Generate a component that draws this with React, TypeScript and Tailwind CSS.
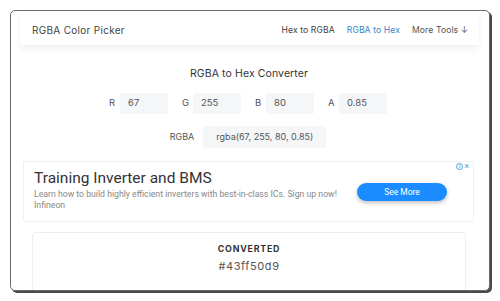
import React from "react";

export default function App() {
  const font = { fontFamily: "Inter, 'Noto Sans', sans-serif" };
  const Field = ({ label, value }: { label: string; value: string }) => (
    <div className="flex items-center">
      <span className="w-[11px] text-[9.5px] text-[#555]">{label}</span>
      <div className="w-[48px] h-[21px] bg-[#f4f6f8] rounded-[2px] flex items-center pl-[8px] text-[9.5px] text-[#555]">
        {value}
      </div>
    </div>
  );
  return (
    <div className="w-[500px] h-[301px] bg-white pt-[10px] pl-[10px]" style={font}>
      <div className="w-[480px] h-[281px] border border-[#6a6a6a] rounded-[5px] shadow-[2px_2px_0_#4a4a4a] overflow-hidden bg-white flex flex-col">
        <div className="ml-[9px] mr-[10px] h-[34px] shrink-0 flex items-center justify-between pl-[12px] pr-[11px] pt-[4px] bg-white shadow-[0_4px_6px_rgba(0,0,0,0.06)]">
          <span className="text-[10px] text-[#444] tracking-[0.3px]">RGBA Color Picker</span>
          <div className="flex items-center gap-[12px] text-[8.6px] tracking-[0.1px]">
            <span className="text-[#444]">Hex to RGBA</span>
            <span className="text-[#3a86c8]">RGBA to Hex</span>
            <span className="text-[#555]">More Tools ↓</span>
          </div>
        </div>
        <div className="mt-[21px] text-center text-[10.5px] leading-[16px] text-[#333] tracking-[0.1px] pr-[2px]">
          RGBA to Hex Converter
        </div>
        <div className="mt-[11px] flex justify-center gap-[14px] pr-[4px]">
          <Field label="R" value="67" />
          <Field label="G" value="255" />
          <Field label="B" value="80" />
          <Field label="A" value="0.85" />
        </div>
        <div className="mt-[12px] flex justify-center items-center gap-[9px] pr-[4px]">
          <span className="text-[9px] text-[#555]">RGBA</span>
          <div className="w-[123px] h-[22px] bg-[#f4f6f8] rounded-[2px] flex items-center justify-center text-[9px] text-[#555]">
            rgba(67, 255, 80, 0.85)
          </div>
        </div>
        <div className="mt-[13px] ml-[12px] w-[451px] h-[61px] shrink-0 border border-[#f0f0f0] rounded-[2px] relative flex items-center" style={{ fontFamily: "Roboto, Arial, sans-serif" }}>
          <div className="absolute top-[0px] right-[4px] flex items-center gap-[1px] text-[#4aa3df] text-[8px] leading-none">
            <span className="inline-flex items-center justify-center w-[7px] h-[7px] rounded-full border border-[#4aa3df] text-[5px] font-bold">i</span>
            <span className="text-[9px]">×</span>
          </div>
          <div className="pl-[10px] flex-1 -mt-[3px]">
            <div className="text-[15.5px] leading-[19px] text-[#333]">Training Inverter and BMS</div>
            <div className="mt-[1px] text-[8.7px] leading-[11px] text-[#888]">
              Learn how to build highly efficient inverters with best-in-class ICs. Sign up now!
            </div>
            <div className="text-[8.7px] leading-[11px] text-[#888]">Infineon</div>
          </div>
          <div className="mr-[26px] mt-[1px] w-[90px] h-[18px] rounded-full bg-[#1a8cff] text-white text-[8.5px] flex items-center justify-center shadow-[0_2px_4px_rgba(0,0,0,0.25)]">
            See More
          </div>
        </div>
        <div className="mt-[10px] ml-[21px] w-[434px] h-[80px] shrink-0 border border-[#eeeeee] rounded-[3px] flex flex-col items-center">
          <div className="mt-[9px] text-[8.8px] font-bold tracking-[0.8px] text-[#333]">CONVERTED</div>
          <div className="mt-[3px] text-[11px] tracking-[0.6px] text-[#555]">#43ff50d9</div>
        </div>
      </div>
    </div>
  );
}
